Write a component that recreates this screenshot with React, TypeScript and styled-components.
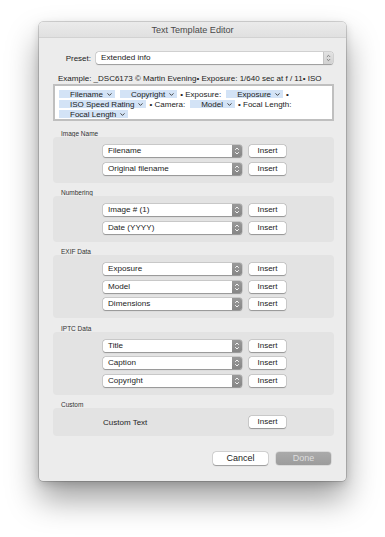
import React from "react";
import styled, { createGlobalStyle } from "styled-components";

const GlobalStyle = createGlobalStyle`
  html, body { margin: 0; padding: 0; background: #ffffff; }
  body { font-family: "Liberation Sans", Arial, Helvetica, sans-serif; color: #222; }
  * { box-sizing: border-box; }
`;

const Page = styled.div`
  width: 385px;
  height: 537px;
  padding: 22px 0 0 39px;
`;

const Window = styled.div`
  width: 307px;
  height: 459px;
  background: #ececec;
  border-radius: 4px;
  box-shadow: 0 0 0 0.5px rgba(0, 0, 0, 0.3), 0 18px 32px rgba(0, 0, 0, 0.38), 0 3px 8px rgba(0, 0, 0, 0.15);
  display: flex;
  flex-direction: column;
  overflow: hidden;
`;

const TitleBar = styled.div`
  height: 16px;
  flex: none;
  background: linear-gradient(#ebebeb, #e0e0e0);
  border-bottom: 1px solid #d2d2d2;
  display: flex;
  align-items: center;
  justify-content: center;
  font-size: 9.1px;
  color: #4a4a4a;
`;

const Body = styled.div`
  flex: 1;
  display: flex;
  flex-direction: column;
  padding: 14px 12px 0 14px;
`;

const PresetRow = styled.div`
  display: flex;
  align-items: center;
  height: 12px;
`;

const PresetLabel = styled.div`
  width: 38px;
  margin-right: 5px;
  text-align: right;
  font-size: 8px;
  color: #222;
`;

const SelectBox = styled.div<{ $grow?: boolean }>`
  display: flex;
  align-items: center;
  height: 12px;
  ${(p) => (p.$grow ? "flex: 1; margin-right: 1px;" : "width: 139px; flex: none;")}
  background: #ffffff;
  border-radius: 2.5px;
  box-shadow: 0 0 0 0.5px rgba(0, 0, 0, 0.18), 0 0.5px 1px rgba(0, 0, 0, 0.28);
  overflow: hidden;
`;

const SelectText = styled.div`
  flex: 1;
  padding-left: 5px;
  font-size: 8.1px;
  color: #222;
  white-space: nowrap;
  line-height: 12px;
`;

const Stepper = styled.div<{ $light?: boolean }>`
  width: 10px;
  height: 12px;
  flex: none;
  background: ${(p) => (p.$light ? "linear-gradient(#e2e2e2, #d2d2d2)" : "linear-gradient(#999, #868686)")};
  border-left: ${(p) => (p.$light ? "0.5px solid #c4c4c4" : "none")};
  display: flex;
  align-items: center;
  justify-content: center;
`;

const ExampleLine = styled.div`
  margin-top: 10px;
  height: 10px;
  line-height: 10px;
  padding-left: 5px;
  font-size: 8px;
  color: #222;
  white-space: nowrap;
`;

const TokenField = styled.div`
  height: 37px;
  background: #ffffff;
  border: 2px solid #bfbfbf;
  padding: 3px 4px 0 4px;
  display: flex;
  flex-direction: column;
`;

const TokenLine = styled.div`
  height: 10px;
  display: flex;
  align-items: center;
  gap: 5px;
`;

const Token = styled.span`
  height: 8px;
  display: inline-flex;
  align-items: center;
  gap: 4px;
  padding: 0 3px 0 11px;
  background: #d3e3f6;
  font-size: 8px;
  color: #222;
  white-space: nowrap;
`;

const Literal = styled.span`
  margin-left: -2px;
  font-size: 8px;
  color: #222;
  white-space: nowrap;
`;

const Sections = styled.div`
  margin-top: 9px;
  display: flex;
  flex-direction: column;
  gap: 6.5px;
`;

const Section = styled.div`
  display: flex;
  flex-direction: column;
`;

const SectionLabel = styled.div`
  height: 7px;
  line-height: 7px;
  padding-left: 8px;
  font-size: 6.5px;
  color: #333;
`;

const SectionBox = styled.div`
  background: #e3e3e3;
  border-radius: 4px;
  padding: 8px 0 8px 50px;
  display: flex;
  flex-direction: column;
  gap: 5.5px;
`;

const Row = styled.div`
  display: flex;
  align-items: center;
  gap: 7px;
  height: 12px;
`;

const InsertButton = styled.div`
  width: 37px;
  height: 12px;
  background: #ffffff;
  border-radius: 2.5px;
  box-shadow: 0 0 0 0.5px rgba(0, 0, 0, 0.18), 0 0.5px 1px rgba(0, 0, 0, 0.28);
  font-size: 8px;
  line-height: 12px;
  text-align: center;
  color: #222;
`;

const CustomLabel = styled.div`
  width: 139px;
  font-size: 8px;
  color: #1e1e1e;
`;

const Footer = styled.div`
  margin-top: 16px;
  display: flex;
  justify-content: flex-end;
  gap: 8px;
  padding-right: 3px;
`;

const DialogButton = styled.div<{ $disabled?: boolean }>`
  width: 55px;
  height: 13px;
  border-radius: 3px;
  font-size: 9px;
  line-height: 13px;
  text-align: center;
  background: ${(p) => (p.$disabled ? "linear-gradient(#aaaaaa, #9c9c9c)" : "#ffffff")};
  color: ${(p) => (p.$disabled ? "#dedede" : "#222")};
  box-shadow: ${(p) =>
    p.$disabled
      ? "0 0 0 0.5px rgba(0,0,0,0.15)"
      : "0 0 0 0.5px rgba(0,0,0,0.18), 0 0.5px 1px rgba(0,0,0,0.28)"};
`;

const Chevron = () => (
  <svg width="5" height="3" viewBox="0 0 5 3">
    <path d="M0.5 0.4 L2.5 2.4 L4.5 0.4" fill="none" stroke="#333" strokeWidth="0.9" />
  </svg>
);

const StepperIcon = ({ light }: { light?: boolean }) => (
  <svg width="10" height="12" viewBox="0 0 10 12">
    <path
      d="M3.2 4.8 L5 3 L6.8 4.8 M3.2 7.2 L5 9 L6.8 7.2"
      fill="none"
      stroke={light ? "#6a6a6a" : "#ffffff"}
      strokeWidth="0.9"
    />
  </svg>
);

const Select = ({ value, grow, light }: { value: string; grow?: boolean; light?: boolean }) => (
  <SelectBox $grow={grow}>
    <SelectText>{value}</SelectText>
    <Stepper $light={light}>
      <StepperIcon light={light} />
    </Stepper>
  </SelectBox>
);

const Tok = ({ label }: { label: string }) => (
  <Token>
    {label}
    <Chevron />
  </Token>
);

const sections: { title: string; items: string[] }[] = [
  { title: "Image Name", items: ["Filename", "Original filename"] },
  { title: "Numbering", items: ["Image # (1)", "Date (YYYY)"] },
  { title: "EXIF Data", items: ["Exposure", "Model", "Dimensions"] },
  { title: "IPTC Data", items: ["Title", "Caption", "Copyright"] },
];

export default function App() {
  return (
    <>
      <GlobalStyle />
      <Page>
        <Window>
          <TitleBar>Text Template Editor</TitleBar>
          <Body>
            <PresetRow>
              <PresetLabel>Preset:</PresetLabel>
              <Select value="Extended info" grow light />
            </PresetRow>
            <ExampleLine>Example:  _DSC6173 © Martin Evening• Exposure: 1/640 sec at f / 11• ISO</ExampleLine>
            <TokenField>
              <TokenLine>
                <Tok label="Filename" />
                <Tok label="Copyright" />
                <Literal>• Exposure:</Literal>
                <Tok label="Exposure" />
                <Literal>•</Literal>
              </TokenLine>
              <TokenLine>
                <Tok label="ISO Speed Rating" />
                <Literal>• Camera:</Literal>
                <Tok label="Model" />
                <Literal>• Focal Length:</Literal>
              </TokenLine>
              <TokenLine>
                <Tok label="Focal Length" />
              </TokenLine>
            </TokenField>
            <Sections>
              {sections.map((s) => (
                <Section key={s.title}>
                  <SectionLabel>{s.title}</SectionLabel>
                  <SectionBox>
                    {s.items.map((it) => (
                      <Row key={it}>
                        <Select value={it} />
                        <InsertButton>Insert</InsertButton>
                      </Row>
                    ))}
                  </SectionBox>
                </Section>
              ))}
              <Section>
                <SectionLabel>Custom</SectionLabel>
                <SectionBox>
                  <Row>
                    <CustomLabel>Custom Text</CustomLabel>
                    <InsertButton>Insert</InsertButton>
                  </Row>
                </SectionBox>
              </Section>
            </Sections>
            <Footer>
              <DialogButton>Cancel</DialogButton>
              <DialogButton $disabled>Done</DialogButton>
            </Footer>
          </Body>
        </Window>
      </Page>
    </>
  );
}
